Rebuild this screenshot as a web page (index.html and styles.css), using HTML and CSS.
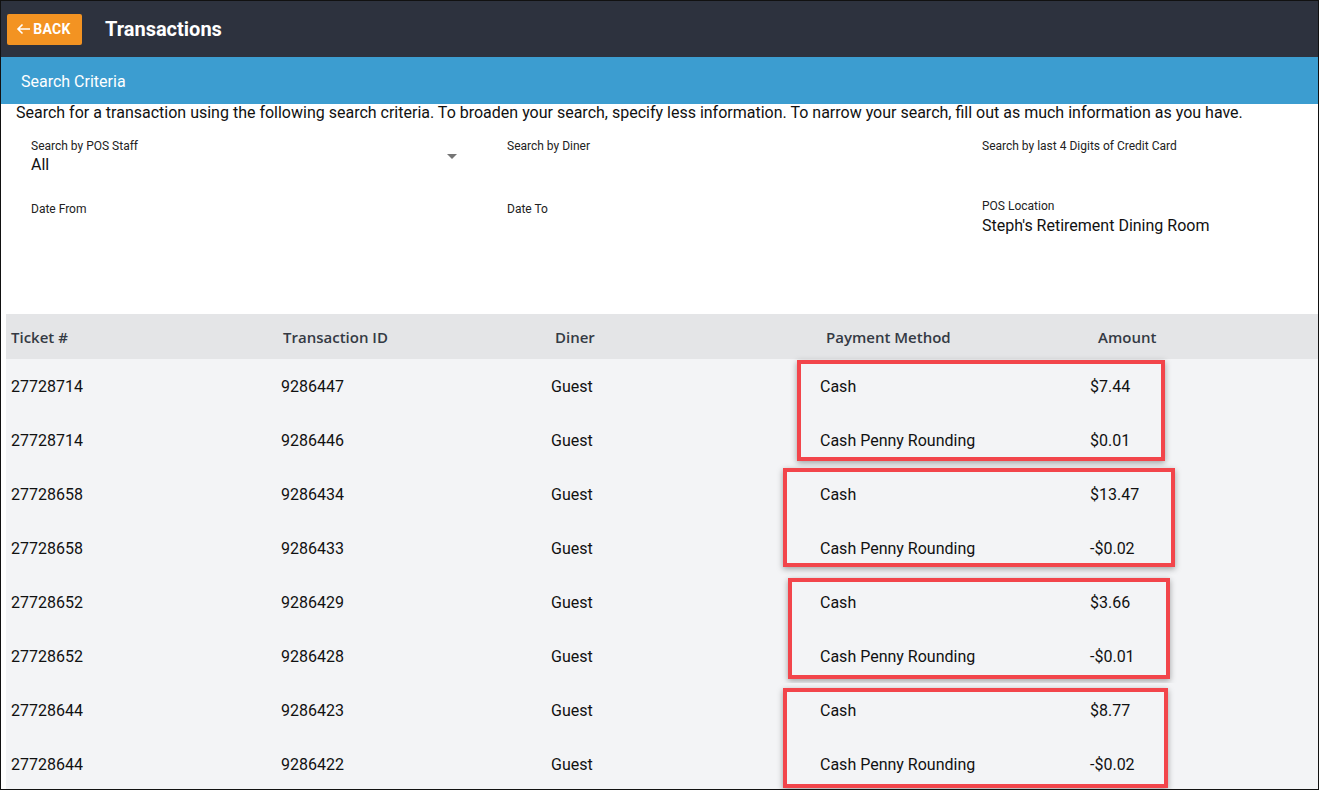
FILE: index.html
```html
<!DOCTYPE html>
<html lang="en">
<head>
    <meta charset="UTF-8">
    <meta name="viewport" content="width=device-width, initial-scale=1.0">
    <title>Transactions</title>
    <link rel="stylesheet" href="styles.css">
</head>
<body>
    <div class="screen">
        <!-- Top bar -->
        <header class="topbar">
            <button class="back-btn">
                <svg width="15" height="12" viewBox="0 0 15 12"><path d="M14 6H2M6.5 1.5L2 6l4.5 4.5" fill="none" stroke="#fff" stroke-width="1.6"/></svg>
                BACK
            </button>
            <h1>Transactions</h1>
        </header>

        <div class="section-bar">Search Criteria</div>
        <p class="intro">Search for a transaction using the following search criteria. To broaden your search, specify less information. To narrow your search, fill out as much information as you have.</p>

        <!-- Search fields -->
        <div class="criteria">
            <div class="select">
                <div class="field">
                    <label>Search by POS Staff</label>
                    <div class="value">All</div>
                </div>
                <svg class="caret" width="10" height="5" viewBox="0 0 10 5"><path d="M0 0h10L5 5z" fill="#757575"/></svg>
            </div>
            <div class="field">
                <label>Search by Diner</label>
            </div>
            <div class="field">
                <label>Search by last 4 Digits of Credit Card</label>
            </div>
            <div class="field low">
                <label>Date From</label>
            </div>
            <div class="field low">
                <label>Date To</label>
            </div>
            <div class="field loc">
                <label>POS Location</label>
                <div class="value">Steph's Retirement Dining Room</div>
            </div>
        </div>

        <!-- Results -->
        <div class="results">
            <div class="thead">
                <div>Ticket #</div>
                <div>Transaction ID</div>
                <div>Diner</div>
                <div>Payment Method</div>
                <div>Amount</div>
            </div>

            <div class="group">
                <div class="row"><div>27728714</div><div>9286447</div><div>Guest</div><div>Cash</div><div>$7.44</div></div>
                <div class="row"><div>27728714</div><div>9286446</div><div>Guest</div><div>Cash Penny Rounding</div><div>$0.01</div></div>
                <span class="mark mark-1"></span>
            </div>
            <div class="group">
                <div class="row"><div>27728658</div><div>9286434</div><div>Guest</div><div>Cash</div><div>$13.47</div></div>
                <div class="row"><div>27728658</div><div>9286433</div><div>Guest</div><div>Cash Penny Rounding</div><div>-$0.02</div></div>
                <span class="mark mark-2"></span>
            </div>
            <div class="group">
                <div class="row"><div>27728652</div><div>9286429</div><div>Guest</div><div>Cash</div><div>$3.66</div></div>
                <div class="row"><div>27728652</div><div>9286428</div><div>Guest</div><div>Cash Penny Rounding</div><div>-$0.01</div></div>
                <span class="mark mark-3"></span>
            </div>
            <div class="group">
                <div class="row"><div>27728644</div><div>9286423</div><div>Guest</div><div>Cash</div><div>$8.77</div></div>
                <div class="row"><div>27728644</div><div>9286422</div><div>Guest</div><div>Cash Penny Rounding</div><div>-$0.02</div></div>
                <span class="mark mark-4"></span>
            </div>
        </div>
    </div>
</body>
</html>
```

FILE: styles.css
```css
body {
    margin: 0;
    font-family: Roboto, "Liberation Sans", sans-serif;
    color: #111;
    background: #fff;
}

.screen {
    width: 1319px;
    height: 790px;
    border: 1px solid #111;
    box-sizing: border-box;
    overflow: hidden;
    background: #fff;
}

.topbar {
    height: 56px;
    background: #2d323e;
    display: flex;
    align-items: center;
    padding-left: 6px;
    gap: 23px;
}

.back-btn {
    width: 75px;
    height: 31px;
    background: #f39322;
    border: none;
    border-radius: 2px;
    color: #fff;
    font-family: Roboto, sans-serif;
    font-weight: 700;
    font-size: 14px;
    letter-spacing: 0.3px;
    display: flex;
    align-items: center;
    justify-content: center;
    gap: 2px;
    padding: 0 6px 0 4px;
    cursor: pointer;
}

.topbar h1 {
    margin: 0;
    color: #fff;
    font-size: 20px;
    font-weight: 700;
}

.section-bar {
    height: 47px;
    box-sizing: border-box;
    background: #3c9dd0;
    color: #fff;
    font-size: 16px;
    display: flex;
    align-items: center;
    padding: 2px 0 0 20px;
}

.intro {
    margin: 0;
    padding: 0 0 0 15px;
    font-size: 16px;
    line-height: 18px;
}

.criteria {
    display: grid;
    grid-template-columns: 476px 475px 1fr;
    align-content: start;
    align-items: start;
    row-gap: 24px;
    padding: 17px 0 0 30px;
    height: 96px;
}

.field label {
    display: block;
    font-size: 12px;
    line-height: 14px;
    color: #222;
}

.field .value {
    font-size: 16px;
    line-height: 20px;
    margin-top: 2px;
}

.field.low {
    padding-top: 3px;
}

.field.loc .value {
    margin-top: 3px;
}

.select {
    width: 426px;
    display: flex;
    justify-content: space-between;
    align-items: center;
}

.caret {
    margin-bottom: 1px;
}

.results {
    margin: 79px 0 0 5px;
}

.thead {
    height: 45px;
    background: #e4e5e7;
    display: grid;
    grid-template-columns: 272px 272px 271px 272px 1fr;
    align-items: center;
    padding-left: 5px;
    font-family: "Open Sans", sans-serif;
    font-weight: 600;
    font-size: 15px;
    color: #343a44;
}

.group {
    position: relative;
    background: #f3f4f6;
}

.row {
    height: 54px;
    display: grid;
    grid-template-columns: 270px 270px 269px 270px 1fr;
    align-items: center;
    padding-left: 5px;
    font-size: 16px;
}

.mark {
    position: absolute;
    border: 4px solid #f2454b;
    box-sizing: border-box;
    box-shadow: 0 2px 6px rgba(0, 0, 0, 0.35);
}

.mark-1 { left: 791px; top: 1px; width: 368px; height: 101px; }
.mark-2 { left: 777px; top: 1px; width: 392px; height: 99px; }
.mark-3 { left: 782px; top: 3px; width: 382px; height: 101px; }
.mark-4 { left: 777px; top: 5px; width: 385px; height: 100px; }
```
